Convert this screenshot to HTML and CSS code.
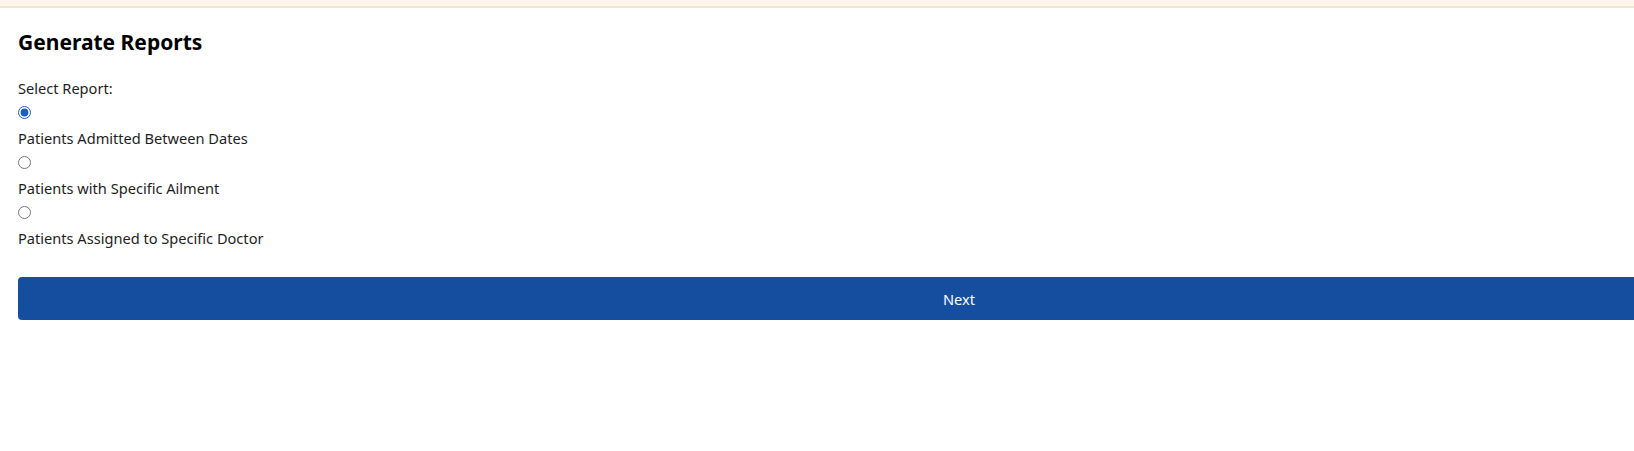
FILE: index.html
```html
<!DOCTYPE html>
<html lang="en">
<head>
<meta charset="utf-8">
<title>Generate Reports</title>
<link rel="stylesheet" href="styles.css">
</head>
<body>
<div class="topbar"></div>
<main class="page">
  <h2 class="title">Generate Reports</h2>
  <form class="report-form">
    <div class="field-label">Select Report:</div>
    <div class="options">
      <input class="radio" type="radio" name="report" id="r1" checked>
      <label class="option-label" for="r1">Patients Admitted Between Dates</label>
      <input class="radio" type="radio" name="report" id="r2">
      <label class="option-label" for="r2">Patients with Specific Ailment</label>
      <input class="radio" type="radio" name="report" id="r3">
      <label class="option-label" for="r3">Patients Assigned to Specific Doctor</label>
    </div>
    <button class="next-btn" type="button">Next</button>
  </form>
</main>
</body>
</html>
```
FILE: styles.css
```css
html, body {
  margin: 0;
  padding: 0;
  background: #ffffff;
  overflow: hidden;
}
body {
  font-family: "Noto Sans", "Open Sans", sans-serif;
  color: #1e1e1e;
}
.topbar {
  height: 6px;
  background: #fff5ec;
  border-bottom: 2px solid #efe6d2;
}
.page {
  padding: 0 18px;
}
.title {
  font-size: 21px;
  font-weight: 700;
  color: #000000;
  margin: 20px 0 0;
  line-height: 28px;
}
.report-form {
  display: flex;
  flex-direction: column;
  align-items: flex-start;
  margin-top: 22px;
}
.field-label {
  font-size: 14.6px;
  line-height: 20px;
}
.options {
  display: flex;
  flex-direction: column;
  align-items: flex-start;
}
.radio {
  margin: 8px 0 0 0;
  width: 13px;
  height: 13px;
  accent-color: #1a5fc8;
}
.option-label {
  font-size: 14.6px;
  line-height: 20px;
  margin-top: 9px;
}
.next-btn {
  margin-top: 29px;
  width: 1882px;
  height: 43px;
  border: none;
  border-radius: 4px;
  background: #164e9f;
  color: #ffffff;
  font-family: "Noto Sans", "Open Sans", sans-serif;
  font-size: 14.6px;
  cursor: pointer;
}
```
